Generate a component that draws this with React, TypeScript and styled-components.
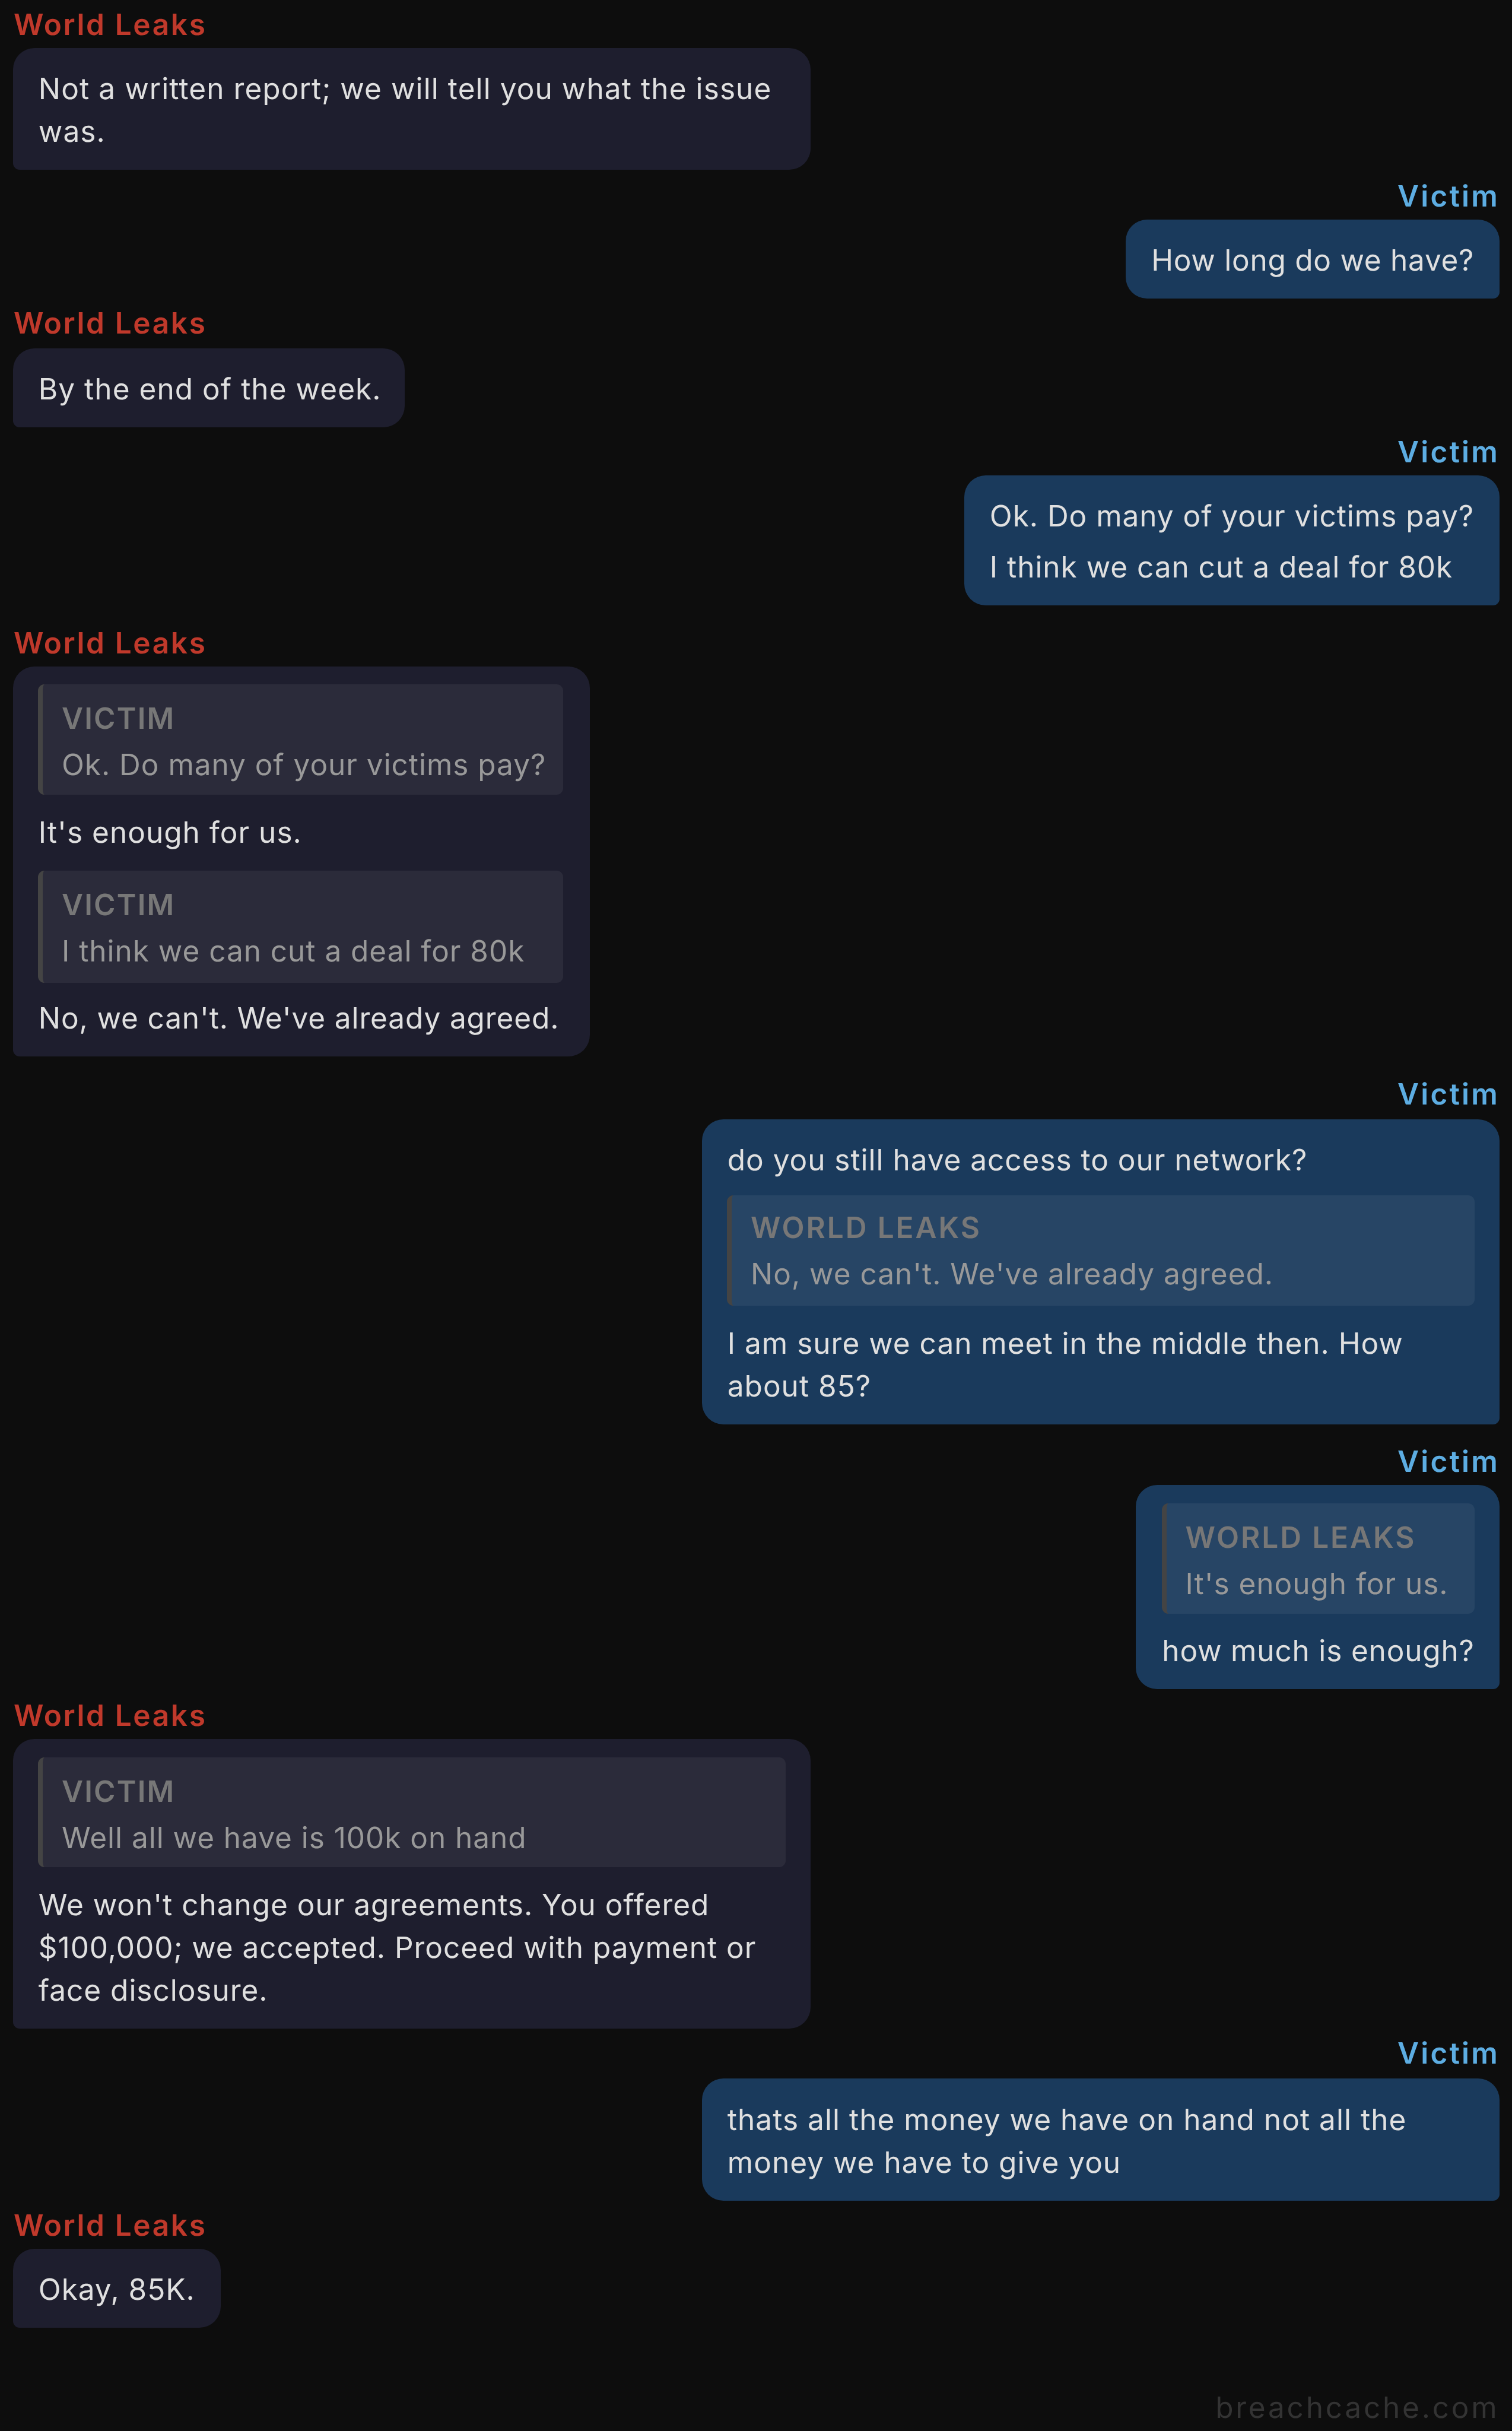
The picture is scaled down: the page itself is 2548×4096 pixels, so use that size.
import styled, { createGlobalStyle } from "styled-components";

const GlobalStyle = createGlobalStyle`
  *,
  *::before,
  *::after {
    box-sizing: border-box;
  }
  body {
    margin: 0;
    background-color: #0d0d0d;
  }
`;

const Page = styled.main`
  display: flex;
  flex-direction: column;
  height: 4096px;
  padding: 11px 21px 10.5px 22px;
  overflow: hidden;
  background-color: #0d0d0d;
  color: #e0e0e0;
  font-family: "Inter", "Liberation Sans", sans-serif;
  font-size: 49.5px;
  letter-spacing: 0.98px;
  text-rendering: geometricPrecision;
`;

const Message = styled.article<{ $side: Side; $gap: number }>`
  display: flex;
  flex-direction: column;
  align-items: ${({ $side }) => ($side === "left" ? "flex-start" : "flex-end")};
  margin-block-start: ${({ $gap }) => $gap}px;
`;

const Name = styled.div<{ $side: Side; $lift: number }>`
  margin: 0 0 ${({ $lift }) => $lift}px 1px;
  line-height: 60px;
  font-weight: 600;
  color: ${({ $side }) => ($side === "left" ? "#c0392b" : "#5dade2")};
  letter-spacing: ${({ $side }) => ($side === "left" ? 2.64 : 3.19)}px;
`;

const Bubble = styled.div<{ $side: Side; $width: number; $inset?: string }>`
  width: ${({ $width }) => $width}px;
  padding: 30.5px 42px 28.5px;
  padding-inline: ${({ $inset }) => $inset ?? "42px"};
  border-radius: ${({ $side }) =>
    $side === "left" ? "36px 36px 36px 11px" : "36px 36px 11px 36px"};
  background-color: ${({ $side }) =>
    $side === "left" ? "#1e1e2e" : "#1a3a5c"};
`;

const Text = styled.p<{ $track?: number }>`
  margin: 0;
  padding: 1.8px 0 0.4px 0.8px;
  line-height: 72px;
  white-space: pre;
  letter-spacing: ${({ $track }) => $track ?? 0.98}px;

  & + & {
    margin-block-start: 11.6px;
  }
`;

const Quote = styled.blockquote<{
  $before: number;
  $after: number;
  $head: number;
  $tail: number;
}>`
  margin: ${({ $before }) => $before}px 0 ${({ $after }) => $after}px;
  padding: ${({ $head }) => $head}px 32px ${({ $tail }) => $tail}px;
  border-inline-start: 8px solid #444;
  border-radius: 11px;
  background-color: rgba(255, 255, 255, 0.06);
  white-space: pre;
`;

const QuoteName = styled.div<{ $track: number }>`
  height: 72px;
  line-height: 72px;
  font-weight: 600;
  color: #777;
  text-transform: uppercase;
  letter-spacing: ${({ $track }) => $track}px;
`;

const QuoteText = styled.div`
  margin-block-start: 6px;
  line-height: 72px;
  color: #999;
`;

const Watermark = styled.footer`
  margin-block-start: auto;
  margin-inline-end: 0.5px;
  align-self: flex-end;
  line-height: 60px;
  color: #333;
  letter-spacing: 3.8px;
`;

const messages: ChatMessage[] = [
  {
    side: "left",
    width: 1343.5,
    parts: [
      {
        text: "Not a written report; we will tell you what the issue\nwas.",
        track: 1.09,
      },
    ],
  },
  {
    side: "right",
    gap: 14,
    width: 630.5,
    inset: "43px 41px",
    parts: [{ text: "How long do we have?", track: 0.75 }],
  },
  {
    side: "left",
    gap: 10.4,
    lift: 13,
    width: 660,
    parts: [{ text: "By the end of the week.", track: 1.05 }],
  },
  {
    side: "right",
    gap: 10.8,
    width: 902,
    parts: [
      { text: "Ok. Do many of your victims pay?" },
      { text: "I think we can cut a deal for 80k" },
    ],
  },
  {
    side: "left",
    gap: 33,
    width: 972,
    inset: "42px 45px",
    parts: [
      { quote: "Victim", text: "Ok. Do many of your victims pay?" },
      { text: "It's enough for us.", track: 1.03 },
      {
        quote: "Victim",
        text: "I think we can cut a deal for 80k",
        before: 29,
        after: 22,
        tail: 17.5,
      },
      { text: "No, we can't. We've already agreed.", track: 0.88 },
    ],
  },
  {
    side: "right",
    gap: 32.8,
    lift: 13,
    width: 1344,
    parts: [
      { text: "do you still have access to our network?" },
      {
        quote: "World Leaks",
        text: "No, we can't. We've already agreed.",
        track: 0.9,
        before: 23.5,
        head: 18,
        tail: 17.7,
      },
      { text: "I am sure we can meet in the middle then. How\nabout 85?", track: 1.01 },
    ],
  },
  {
    side: "right",
    gap: 32.8,
    width: 613,
    inset: "43.5px 42px",
    parts: [
      { quote: "World Leaks", text: "It's enough for us." },
      { text: "how much is enough?", track: 0.83 },
    ],
  },
  {
    side: "left",
    gap: 13.8,
    width: 1343.5,
    parts: [
      { quote: "Victim", text: "Well all we have is 100k on hand" },
      {
        text: "We won't change our agreements. You offered\n$100,000; we accepted. Proceed with payment or\nface disclosure.",
        track: 0.98,
      },
    ],
  },
  {
    side: "right",
    gap: 11.4,
    lift: 13,
    width: 1344,
    parts: [
      {
        text: "thats all the money we have on hand not all the\nmoney we have to give you",
        track: 1.04,
      },
    ],
  },
  {
    side: "left",
    gap: 11.2,
    width: 349.5,
    parts: [{ text: "Okay, 85K." }],
  },
];

export default function App() {
  return (
    <>
      <GlobalStyle />
      <Page>
        {messages.map(({ side, gap = 0, lift = 10, width, inset, parts }, i) => (
          <Message key={i} $side={side} $gap={gap}>
            <Name $side={side} $lift={lift}>
              {side === "left" ? "World Leaks" : "Victim"}
            </Name>
            <Bubble $side={side} $width={width} $inset={inset}>
              {parts.map((part, j) =>
                part.quote ? (
                  <Quote
                    key={j}
                    $before={part.before ?? 0}
                    $after={part.after ?? 25}
                    $head={part.head ?? 21}
                    $tail={part.tail ?? 14.7}
                  >
                    <QuoteName $track={part.quote === "Victim" ? 2.2 : 2.91}>
                      {part.quote}
                    </QuoteName>
                    <QuoteText>{part.text}</QuoteText>
                  </Quote>
                ) : (
                  <Text key={j} $track={part.track}>
                    {part.text}
                  </Text>
                ),
              )}
            </Bubble>
          </Message>
        ))}
        <Watermark>breachcache.com</Watermark>
      </Page>
    </>
  );
}

type Side = "left" | "right";

interface MessagePart {
  text: string;
  track?: number;
  quote?: string;
  before?: number;
  after?: number;
  head?: number;
  tail?: number;
}

interface ChatMessage {
  side: Side;
  gap?: number;
  lift?: number;
  width: number;
  inset?: string;
  parts: MessagePart[];
}
